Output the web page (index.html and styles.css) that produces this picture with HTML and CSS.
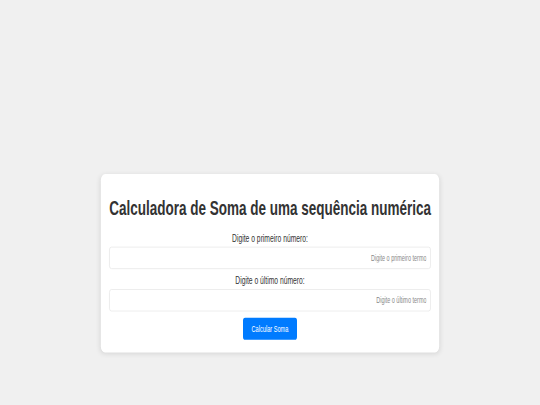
FILE: index.html
```html
<!DOCTYPE html>
<html lang="pt-BR">

<head>
    <meta charset="UTF-8">
    <meta name="viewport" content="width=device-width, initial-scale=1.0">
    <title>Calculadora de Soma</title>
    <link rel="stylesheet" href="styles.css">
</head>

<body>
    <div class="frame">
        <div class="screen">
            <div class="container">
                <h1 class="title">Calculadora de Soma de uma sequência numérica</h1>
                <label class="lbl" for="primeiro">Digite o primeiro número:</label>
                <input type="number" id="primeiro" class="txt" placeholder="Digite o primeiro termo">
                <label class="lbl" for="ultimo">Digite o último número:</label>
                <input type="number" id="ultimo" class="txt" placeholder="Digite o último termo">
                <div class="action">
                    <button class="calc">Calcular Soma</button>
                </div>
            </div>
        </div>
    </div>
</body>

</html>
```

FILE: styles.css
```css
html, body{
    margin: 0;
    padding: 0;
    width: 540px;
    height: 405px;
    overflow: hidden;
    background-color: #f0f0f0;
}
.frame{
    width: 540px;
    height: 405px;
    overflow: hidden;
}
/* page was captured squeezed, so the whole screen gets scaled */
.screen{
    width: 1280px;
    height: 640px;
    padding-top: 275px;
    box-sizing: border-box;
    background-color: #f0f0f0;
    font-family: "Liberation Sans", Arial, sans-serif;
    transform: scale(0.421875, 0.6328125);
    transform-origin: 0 0;
}
.container{
    width: 802px;
    margin: 0 auto;
    padding: 20px 20px 20px 20px;
    box-sizing: border-box;
    background-color: #fff;
    border-radius: 10px;
    box-shadow: 0 2px 10px rgba(0, 0, 0, 0.1);
    text-align: center;
}
.title{
    font-size: 32px;
    color: #333;
    white-space: nowrap;
    margin: 16px 0 20px 0;
}
.lbl{
    display: block;
    font-size: 16px;
    color: #333;
    margin-bottom: 4px;
}
.txt{
    display: block;
    width: 100%;
    height: 35px;
    box-sizing: border-box;
    padding: 8px 9px;
    margin-bottom: 10px;
    border: 1px solid #ddd;
    border-radius: 5px;
    font-family: "Liberation Sans", Arial, sans-serif;
    font-size: 13px;
    text-align: right;
    outline: none;
    -moz-appearance: textfield;
}
.txt::-webkit-inner-spin-button,
.txt::-webkit-outer-spin-button{
    -webkit-appearance: none;
    margin: 0;
}
.txt::placeholder{
    color: #888;
}
.calc{
    height: 35px;
    padding: 0 20px;
    background-color: #007bff;
    color: #fff;
    border: none;
    border-radius: 5px;
    font-family: "Liberation Sans", Arial, sans-serif;
    font-size: 13.33px;
}
```
